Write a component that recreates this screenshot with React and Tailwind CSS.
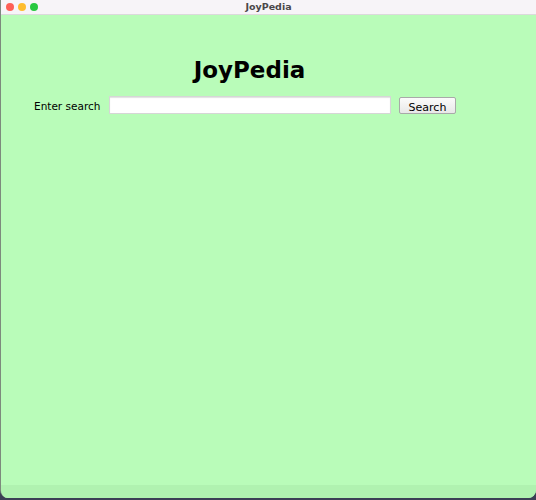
// JoyPedia search window — simple mac-style frame with a green content pane.

function TrafficLights() {
  return (
    <div className="flex items-center gap-[4px] pl-[5px]">
      <span className="w-[8px] h-[8px] rounded-full bg-[#fe5f57]" />
      <span className="w-[8px] h-[8px] rounded-full bg-[#febc2e]" />
      <span className="w-[8px] h-[8px] rounded-full bg-[#28c840]" />
    </div>
  );
}

export default function App() {
  return (
    <div className="w-[536px] h-[500px] bg-[#3b3f55] font-['DejaVu_Sans',Verdana,sans-serif]">
      <div className="h-[498px] flex flex-col rounded-b-[8px] overflow-hidden border-l border-[#7d8a7d]">
        {/* Title bar */}
        <div className="h-[15px] bg-[#f7f4f8] flex items-center relative border-b border-[#dcd9dc]">
          <TrafficLights />
          <span className="absolute left-0 right-0 text-center text-[9.5px] font-semibold text-[#4a474a] leading-none">
            JoyPedia
          </span>
        </div>

        {/* Content */}
        <div className="flex-1 bg-[#b9fcb9] flex flex-col">
          <div className="ml-[33px] w-[431px] pt-[41px]">
            <h1 className="text-center text-[23px] font-bold text-black leading-[28px]">JoyPedia</h1>
            <div className="mt-[12px] flex items-center">
              <label className="text-[10.5px] text-black w-[75px] pt-[3px]">Enter search</label>
              <input
                type="text"
                className="w-[282px] h-[18px] bg-white border border-[#d6d6d6] shadow-[inset_0_1px_1px_rgba(0,0,0,0.12)] outline-none"
              />
              <button className="ml-[8px] mt-[1px] w-[57px] h-[17px] pt-[3px] text-[11px] text-black bg-gradient-to-b from-[#fbfbfb] to-[#e8e8e8] border border-[#a9a9a9] rounded-[2px] leading-none">
                Search
              </button>
            </div>
          </div>
          <div className="flex-1" />
          <div className="h-[13px] bg-[#b0f2b0]" />
        </div>
      </div>
    </div>
  );
}
